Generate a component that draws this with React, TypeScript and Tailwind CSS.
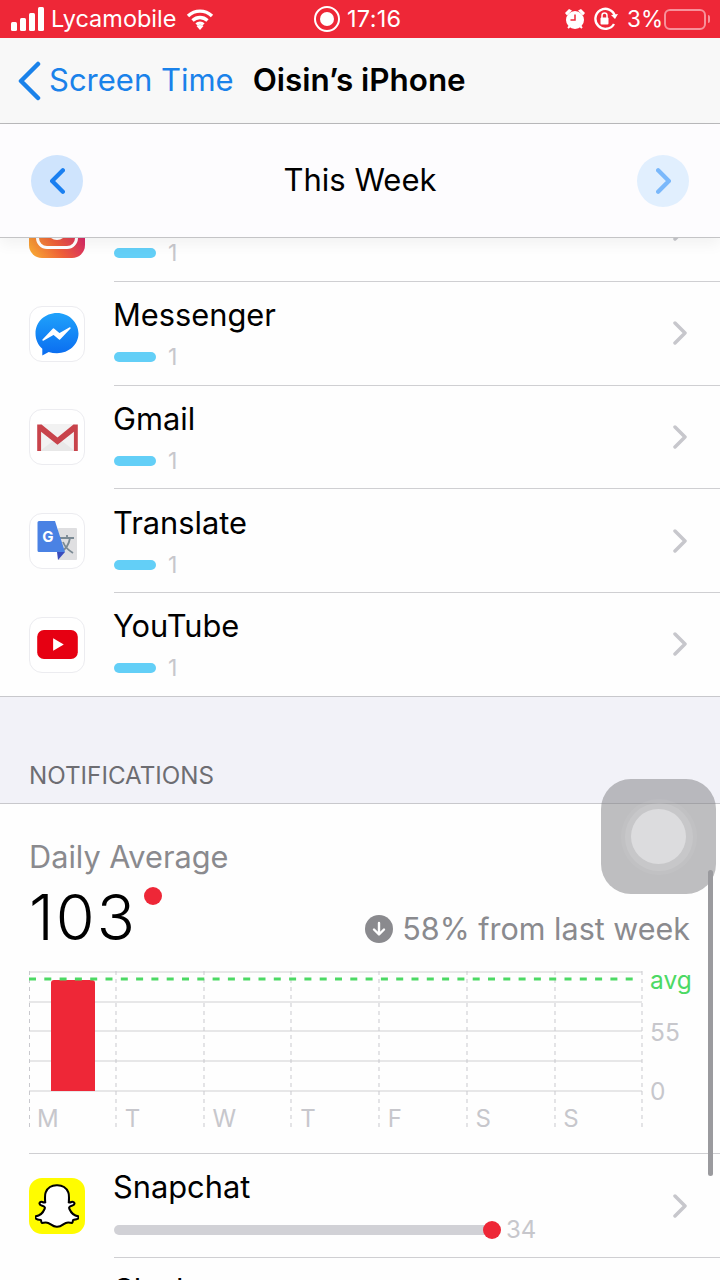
import { FaSnapchatGhost } from "react-icons/fa";

const font = { fontFamily: "Inter, 'Liberation Sans', sans-serif" };

const Chevron = ({ className, weight = 3.5 }: { className: string; weight?: number }) => (
  <svg viewBox="0 0 14 24" className={className} fill="none" stroke="currentColor" strokeWidth={weight} strokeLinecap="round" strokeLinejoin="round">
    <path d="M2 2l10 10L2 22" />
  </svg>
);

const AppIcon = ({ children, className = "bg-white border border-[#ececf0]" }: { children?: React.ReactNode; className?: string }) => (
  <div className={`w-14 h-14 rounded-[13px] flex items-center justify-center shrink-0 overflow-hidden ${className}`}>{children}</div>
);

const Messenger = () => (
  <svg viewBox="0 0 44 44" className="w-11 h-11">
    <defs>
      <linearGradient id="ms" x1="0" y1="0" x2="0" y2="1">
        <stop offset="0" stopColor="#1fa2fb" />
        <stop offset="1" stopColor="#0a6cf0" />
      </linearGradient>
    </defs>
    <path d="M22 1C10 1 .5 9.800.5 21.500c0 6.200 2.600 11.500 6.800 15.200v6.800l6.400-3.500c2.600.8 5.400 1.200 8.300 1.200 12 0 21.500-8.800 21.500-19.700S34 1 22 1z" fill="url(#ms)" />
    <path d="M8 28l10.500-11 6 5 10.500-6-10.500 11-6-5z" fill="#fff" stroke="#fff" strokeWidth="1.500" strokeLinejoin="round" />
  </svg>
);

const Gmail = () => (
  <svg viewBox="0 0 42 30" className="w-[41px] h-[29px]">
    <path d="M3 1h36v28H3z" fill="#f2f2f2" />
    <path d="M3 29L21 15l18 14z" fill="#e8e8e8" />
    <path d="M0 1.500h4.500L21 15 37.500 1.500H42V29h-4V9L21 22.500 4 9v20H0z" fill="#c8434b" />
  </svg>
);

const Translate = () => (
  <svg viewBox="0 0 42 42" className="w-[42px] h-[42px]">
    <rect x="22" y="8" width="19" height="32" rx="1" fill="#dfdfe1" />
    <path d="M31 15v3M24 18h14M34 18c-1 6-4 11-9 14M27 22c2 5 5 8 10 11" stroke="#7b8a94" strokeWidth="1.800" fill="none" />
    <path d="M3 1h16l10 31H3a1.500 1.500 0 01-1.500-1.500v-28A1.500 1.500 0 013 1z" fill="#4a82e4" />
    <path d="M21 32h8l-7 8z" fill="#3a4dbd" />
    <text x="12" y="22" textAnchor="middle" fontSize="15" fontWeight="700" fill="#fff" fontFamily="Inter, sans-serif">G</text>
  </svg>
);

const YouTube = () => (
  <svg viewBox="0 0 42 30" className="w-[41px] h-[29px]">
    <rect width="42" height="30" rx="7" fill="#e60012" />
    <path d="M16.500 8.500L27.500 15l-11 6.500z" fill="#fff" />
  </svg>
);

const Instagram = () => (
  <div className="w-14 h-14 rounded-[13px] shrink-0 overflow-hidden bg-[linear-gradient(60deg,#f9b233_0%,#ee5f38_40%,#d62a66_75%,#a51e96_100%)] flex items-center justify-center">
    <div className="w-[42px] h-[38px] rounded-[11px] border-[3px] border-white flex items-center justify-center">
      <div className="w-5 h-5 rounded-full border-[3px] border-white" />
    </div>
  </div>
);

type RowProps = { name?: string; icon: React.ReactNode };

const AppRow = ({ name, icon }: RowProps) => (
  <div className="h-[103.75px] flex items-center pl-[29px]">
    {icon}
    <div className="ml-[29px] flex-1 h-full border-b border-[#cfcfd2] flex items-center pr-[33px]">
      <div className="flex-1 pt-[2px]">
        <p className="text-[30.8px] leading-[40px] text-black -mt-[4px] -ml-[1px]">{name}</p>
        <div className="flex items-center mt-[10px]">
          <div className="w-[42px] h-[10px] rounded-full bg-[#63cff7]" />
          <span className="ml-[12px] text-[23px] leading-[24px] text-[#c7c7cc]">1</span>
        </div>
      </div>
      <Chevron className="w-[14px] h-[24px] text-[#c7c7cc]" />
    </div>
  </div>
);

const days = ["M", "T", "W", "T", "F", "S", "S"];

export default function App() {
  return (
    <div className="relative w-[720px] h-[1280px] overflow-hidden bg-[#fefefe]" style={font}>
      {/* status bar */}
      <div className="h-[38px] bg-[#ee2737] text-white flex items-center relative text-[23.500px]">
        <svg viewBox="0 0 33 24" className="ml-[11px] w-[33px] h-[24px]" fill="#fff">
          <rect x="0" y="15" width="6" height="9" rx="1.500" />
          <rect x="9" y="11" width="6" height="13" rx="1.500" />
          <rect x="18" y="6" width="6" height="18" rx="1.500" />
          <rect x="27" y="0" width="6" height="24" rx="1.500" />
        </svg>
        <span className="ml-[7px] w-[128px]">Lycamobile</span>
        <svg viewBox="0 0 28 22" className="ml-[7px] w-[28px] h-[22px]" fill="none" stroke="#fff" strokeWidth="3.400">
          <path d="M2 8c7-6.500 17-6.500 24 0M6.500 12.500c4.500-4 10.500-4 15 0M10.500 16.500c2-1.700 5-1.700 7 0" />
          <path d="M14 22l-3.500-4c2-1.500 5-1.500 7 0z" fill="#fff" stroke="none" />
        </svg>
        <div className="ml-[100px] w-[26px] h-[26px] rounded-full border-2 border-white flex items-center justify-center">
          <div className="w-[14px] h-[14px] rounded-full bg-white" />
        </div>
        <span className="ml-[7px] w-[60px] tracking-[0.3px]">17:16</span>
        <svg viewBox="0 0 22 24" className="ml-[157px] w-[22px] h-[24px]">
          <circle cx="11" cy="13" r="9" fill="#fff" />
          <path d="M1 6l4-4 3 1.500-5 5zM21 6l-4-4-3 1.500 5 5z" fill="#fff" />
          <path d="M11 7.500V13H6.500" stroke="#ee2737" strokeWidth="1.500" fill="none" />
          <path d="M4 21l2-2M18 21l-2-2" stroke="#fff" strokeWidth="2" />
        </svg>
        <svg viewBox="0 0 26 24" className="ml-[7px] w-[26px] h-[24px]" fill="none">
          <path d="M21 17a10 10 0 111-8" stroke="#fff" strokeWidth="2.400" />
          <path d="M25 7l-3 5-4-4z" fill="#fff" />
          <rect x="7.500" y="10.500" width="8" height="7" rx="1" fill="#fff" />
          <path d="M9 11V8.500a2.500 2.500 0 015 0V11" stroke="#fff" strokeWidth="1.500" />
        </svg>
        <span className="ml-[8px] w-[37px] text-[22.500px]">3%</span>
        <div className="w-[42px] h-[21px] rounded-[6px] border-2 border-[#f7909a]" />
        <div className="ml-[2px] w-[2px] h-[8px] rounded-r bg-[#f7909a]" />
      </div>

      {/* nav bar */}
      <div className="h-[86px] bg-[#f8f8f8] border-b border-[#b9b9bb] flex items-center pl-[17px] text-[31px]">
        <svg viewBox="0 0 24 40" className="w-[24px] h-[40px] text-[#1a82ea]" fill="none" stroke="currentColor" strokeWidth="4.500" strokeLinecap="round" strokeLinejoin="round">
          <path d="M21 3L4 20l17 17" />
        </svg>
        <span className="ml-[8px] text-[#1a82ea]">Screen Time</span>
        <span className="ml-[19px] text-[31.400px] text-black font-semibold">Oisin’s iPhone</span>
      </div>

      {/* week switcher */}
      <div className="relative z-10 h-[114px] bg-[#fdfcfe] border-b border-[#c4c4c6] flex items-center justify-between px-[31px] shadow-[0_6px_14px_rgba(0,0,0,0.05)]">
        <div className="w-[52px] h-[52px] rounded-full bg-[#cfe4fd] flex items-center justify-center">
          <Chevron className="w-[15px] h-[26px] rotate-180 text-[#1a7ff0]" weight={4} />
        </div>
        <span className="text-[31px] text-black">This Week</span>
        <div className="w-[52px] h-[52px] rounded-full bg-[#e1effe] flex items-center justify-center">
          <Chevron className="w-[15px] h-[26px] text-[#7ab8fb]" weight={4} />
        </div>
      </div>

      {/* scrolled list */}
      <div className="h-[458px] overflow-hidden">
        <div className="-mt-[60px]">
          <AppRow name="Instagram" icon={<Instagram />} />
          <AppRow name="Messenger" icon={<AppIcon><Messenger /></AppIcon>} />
          <AppRow name="Gmail" icon={<AppIcon><Gmail /></AppIcon>} />
          <AppRow name="Translate" icon={<AppIcon><Translate /></AppIcon>} />
          <AppRow name="YouTube" icon={<AppIcon><YouTube /></AppIcon>} />
        </div>
      </div>

      {/* notifications */}
      <div className="h-[108px] bg-[#f2f2f8] border-y border-[#c8c8cc] flex items-end px-[29px] pb-[12px]">
        <span className="text-[24.200px] leading-[30px] text-[#6d6d72]">NOTIFICATIONS</span>
      </div>

      <div className="pt-[33px]">
        <p className="pl-[29px] text-[30.700px] leading-[40px] text-[#8a8a8e]">Daily Average</p>
        <div className="flex justify-between pl-[29px] pr-[30px] h-[74px] mt-[3px]">
          <div className="flex">
            <span className="text-[63px] leading-[74px] tracking-[2px] text-black font-light">103</span>
            <div className="ml-[7px] mt-[7px] w-[18px] h-[18px] rounded-full bg-[#ee2737]" />
          </div>
          <div className="flex items-end pb-[7px]">
            <div className="w-[28px] h-[28px] rounded-full bg-[#8a8a8e] flex items-center justify-center mb-[4px]">
              <svg viewBox="0 0 16 16" className="w-[16px] h-[16px]" fill="none" stroke="#fff" strokeWidth="2.400" strokeLinecap="round" strokeLinejoin="round">
                <path d="M8 2v11M3 8.500L8 13.500l5-5" />
              </svg>
            </div>
            <span className="ml-[9px] text-[30.500px] leading-[36px] text-[#8a8a8e]">58% from last week</span>
          </div>
        </div>

        {/* chart */}
        <div className="flex mt-[17px] pl-[29px]">
          <div className="relative w-[614px] h-[158px]">
            <svg viewBox="0 0 614 158" className="absolute inset-0 w-[614px] h-[158px]">
              {[1, 31, 60, 90, 120].map((y) => (
                <line key={y} x1="0" x2="613" y1={y} y2={y} stroke="#cfcfd2" strokeWidth="1.200" />
              ))}
              {[0.5, 87, 175, 262, 350, 438, 526, 613].map((x) => (
                <line key={x} x1={x} x2={x} y1="0" y2="158" stroke="#c9c9ce" strokeWidth="1" strokeDasharray="4 4" />
              ))}
              <path d="M22 120V12a3 3 0 013-3h38a3 3 0 013 3v108z" fill="#ee2737" />
              <line x1="0" x2="612" y1="8" y2="8" stroke="#4cd964" strokeWidth="3" strokeDasharray="7 8.300" />
            </svg>
            <div className="relative grid grid-cols-7 pt-[133px]">
              {days.map((d, i) => (
                <span key={i} className="pl-[8px] text-[24px] leading-[30px] text-[#c7c7cc]">{d}</span>
              ))}
            </div>
          </div>
          <div className="ml-[7px] flex flex-col text-[24.500px] leading-[30px] text-[#c7c7cc]">
            <span className="text-[#4cd964] -mt-[6px]">avg</span>
            <span className="mt-[22px]">55</span>
            <span className="mt-[29px]">0</span>
          </div>
        </div>

        <div className="mt-[24px] ml-[29px] border-t border-[#cfcfd2]" />

        {/* snapchat row */}
        <div className="h-[104px] flex items-center pl-[29px]">
          <AppIcon className="bg-[#fffc00]">
            <FaSnapchatGhost className="w-[44px] h-[44px] text-white" stroke="#000" strokeWidth={24} />
          </AppIcon>
          <div className="ml-[29px] flex-1 h-full border-b border-[#cfcfd2] flex items-center pr-[33px]">
            <div className="flex-1">
              <p className="text-[30.800px] leading-[40px] text-black -mt-[3px] -ml-[1px]">Snapchat</p>
              <div className="flex items-center mt-[11px]">
                <div className="w-[378px] h-[10px] rounded-l-full bg-[#d1d1d6]" />
                <div className="-ml-[9px] w-[18px] h-[18px] rounded-full bg-[#ee2737]" />
                <span className="ml-[5px] text-[24px] leading-[24px] text-[#c7c7cc]">34</span>
              </div>
            </div>
            <Chevron className="w-[14px] h-[24px] text-[#c7c7cc]" />
          </div>
        </div>
        <p className="pl-[114px] pt-[12px] text-[30.800px] leading-[40px] text-black">Slack</p>
      </div>

      {/* assistive touch */}
      <div className="absolute left-[601px] top-[779px] w-[115px] h-[115px] rounded-[30px] bg-[rgba(125,125,130,0.5)] flex items-center justify-center">
        <div className="w-[76px] h-[76px] rounded-full bg-white/5 flex items-center justify-center">
          <div className="w-[68px] h-[68px] rounded-full bg-white/10 flex items-center justify-center">
            <div className="w-[55px] h-[55px] rounded-full bg-[#dcdcde]" />
          </div>
        </div>
      </div>

      {/* scroll indicator */}
      <div className="absolute left-[708px] top-[870px] w-[5px] h-[306px] rounded-full bg-[#9a9a9e]" />
    </div>
  );
}
